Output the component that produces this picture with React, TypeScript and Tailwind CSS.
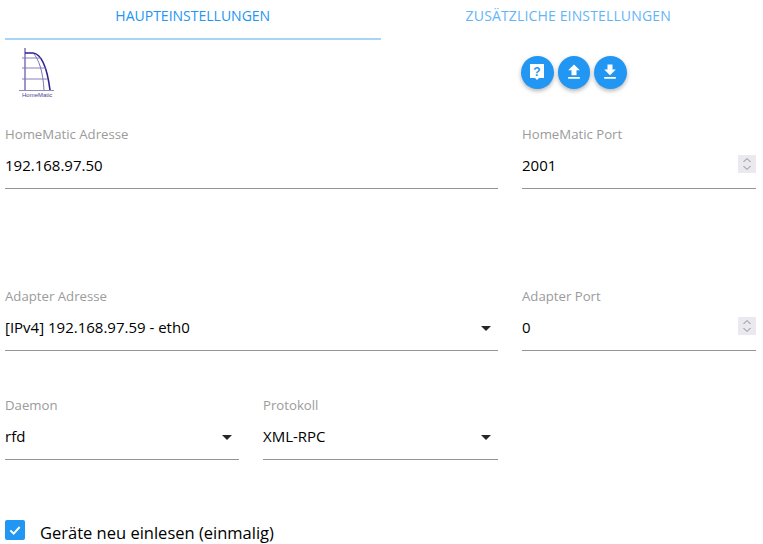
import React from 'react';

const font = "[font-family:'Open_Sans',sans-serif]";

function Chevron() {
  return (
    <svg width="24" height="24" viewBox="0 0 24 24" className="absolute right-0 bottom-[10px] fill-[#000000d9]">
      <path d="M7 10l5 5 5-5z" />
    </svg>
  );
}

function Spinner() {
  return (
    <span className="absolute right-0 bottom-[15px] flex h-[18px] w-[18px] items-center justify-center bg-[#e9e9ef]">
      <svg width="12" height="16" viewBox="0 0 12 16" fill="none" stroke="#8a8a8a" strokeWidth="1">
        <path d="M2.5 6l3.5-3.5L9.500 6M2.500 10l3.500 3.500 3.500-3.500" />
      </svg>
    </span>
  );
}

function Field({ label, value, select, number }: { label: string; value: string; select?: boolean; number?: boolean }) {
  return (
    <div className="relative h-[65px] border-b border-[#949494]">
      <div className="pt-[1px] text-[13.2px] leading-[18px] text-[#9b9b9b]">{label}</div>
      <div className="mt-[11px] text-[15px] leading-[22px] text-black">{value}</div>
      {select && <Chevron />}
      {number && <Spinner />}
    </div>
  );
}

function RoundButton({ children }: { children: React.ReactNode }) {
  return (
    <button className="flex h-[32.5px] w-[32.5px] items-center justify-center rounded-full bg-[#2196f3] shadow-[0_2px_4px_rgba(0,0,0,0.3)]">
      {children}
    </button>
  );
}

function Logo() {
  return (
    <svg width="36" height="52" viewBox="0 0 36 52" fill="none" className="block">
      <path d="M6 1V43" stroke="#3a2f8f" strokeWidth="1" />
      <path d="M6 6H14C23 7 28 20 31 43" stroke="#2c2190" strokeWidth="1.600" />
      <path d="M14 6C20 12 24 25 25 43" stroke="#5a52a2" strokeWidth="0.800" />
      <path d="M3 11H22M3 21H27M3 32H29" stroke="#7a74b4" strokeWidth="0.900" />
      <path d="M0 43.500H35" stroke="#8f8ac0" strokeWidth="1" />
      <text x="3" y="49.500" fontSize="6" fill="#4b4790" fontFamily="'Liberation Sans',sans-serif">HomeMatic</text>
    </svg>
  );
}

export default function App() {
  return (
    <div className={`h-[544px] w-[763px] overflow-hidden bg-white pl-[5px] pr-[7px] ${font}`}>
      <div className="flex h-[40px]">
        <div className="flex w-[376px] justify-center border-b-2 border-[#a6d5fa] pt-[6px] text-[14px] leading-[20px] text-[#2196f3]">
          HAUPTEINSTELLUNGEN
        </div>
        <div className="flex w-[376px] justify-center pt-[6px] text-[14px] leading-[20px] tracking-[0.15px] text-[#64b5f6]">
          ZUSÄTZLICHE EINSTELLUNGEN
        </div>
      </div>

      <div className="grid grid-cols-[493px_234px] gap-x-[24px]">
        <div className="h-[84px] pl-[14px] pt-[7px]">
          <Logo />
        </div>
        <div className="-ml-[1px] flex gap-[4px] pt-[16px]">
          <RoundButton>
            <svg width="20" height="20" viewBox="0 0 20 20">
              <path fill="#fff" d="M3 2h14v14h-5l-2 2-2-2H3z" />
              <text x="10" y="14" fontSize="12" fontWeight="700" textAnchor="middle" fill="#2196f3" fontFamily="'Liberation Sans',sans-serif">?</text>
            </svg>
          </RoundButton>
          <RoundButton>
            <svg width="20" height="20" viewBox="0 0 24 24" fill="#fff">
              <path d="M9 16h6v-6h4l-7-7-7 7h4zm-4 2h14v2H5z" />
            </svg>
          </RoundButton>
          <RoundButton>
            <svg width="20" height="20" viewBox="0 0 24 24" fill="#fff">
              <path d="M19 9h-4V3H9v6H5l7 7 7-7zM5 18v2h14v-2H5z" />
            </svg>
          </RoundButton>
        </div>

        <Field label="HomeMatic Adresse" value="192.168.97.50" />
        <Field label="HomeMatic Port" value="2001" number />

        <div className="col-span-2 h-[97px]" />

        <Field label="Adapter Adresse" value="[IPv4] 192.168.97.59 - eth0" select />
        <Field label="Adapter Port" value="0" number />

        <div className="col-span-2 h-[44px]" />

        <div className="grid grid-cols-[234px_235px] gap-x-[24px]">
          <Field label="Daemon" value="rfd" select />
          <Field label="Protokoll" value="XML-RPC" select />
        </div>
        <div />

        <div className="col-span-2 flex items-start gap-[15px] pt-[60px]">
          <span className="flex h-[20px] w-[20px] items-center justify-center rounded-[2px] bg-[#2196f3]">
            <svg width="16" height="16" viewBox="0 0 24 24" fill="none" stroke="#fff" strokeWidth="3">
              <path d="M5 12.500l5 5 9-10" />
            </svg>
          </span>
          <span className="mt-[2px] text-[16.5px] leading-[22px] text-black">Geräte neu einlesen (einmalig)</span>
        </div>
      </div>
    </div>
  );
}
